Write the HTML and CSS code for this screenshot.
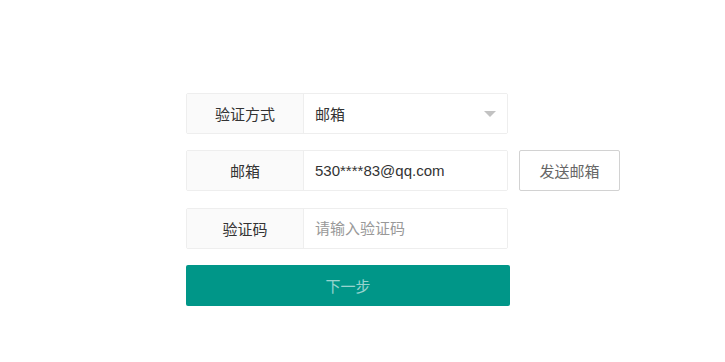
FILE: index.html
```html
<!DOCTYPE html>
<html lang="zh-CN">
<head>
  <meta charset="UTF-8" />
  <meta name="viewport" content="width=device-width, initial-scale=1" />
  <title>找回密码</title>
  <link rel="stylesheet" href="styles.css">
</head>
<body>
  <div class="page">
    <form class="verify-form" onsubmit="return false;">
      <div class="row">
        <div class="field">
          <label class="field-label">验证方式</label>
          <div class="field-input select">
            <span>邮箱</span>
            <i class="arrow"></i>
          </div>
        </div>
      </div>

      <div class="row">
        <div class="field">
          <label class="field-label">邮箱</label>
          <div class="field-input">530****83@qq.com</div>
        </div>
        <button type="button" class="send-btn">发送邮箱</button>
      </div>

      <div class="row">
        <div class="field">
          <label class="field-label" for="code">验证码</label>
          <input class="field-input" id="code" type="text" placeholder="请输入验证码" />
        </div>
      </div>

      <button type="submit" class="next-btn">下一步</button>
    </form>
  </div>
</body>
</html>
```

FILE: styles.css
```css
body {
  margin: 0;
  background-color: #fff;
  color: #333;
  font-family: 'Liberation Sans', 'Noto Sans CJK SC', sans-serif;
  font-size: 15px;
}
.page {
  padding: 93px 0 0 186px;
}
.verify-form {
  display: flex;
  flex-direction: column;
  align-items: flex-start;
  gap: 16.4px;
  width: 324px;
}
.row {
  display: flex;
  align-items: center;
}
.field {
  display: flex;
  width: 322px;
  height: 41px;
  border: 1px solid #eee;
  border-radius: 2px;
  box-sizing: border-box;
  overflow: hidden;
}
.field-label {
  width: 117px;
  flex: none;
  display: flex;
  align-items: center;
  justify-content: center;
  background-color: #fafafa;
  border-right: 1px solid #eee;
  box-sizing: border-box;
  color: #333;
}
.field-input {
  flex: 1;
  min-width: 0;
  display: flex;
  align-items: center;
  padding: 0 11px;
  border: none;
  outline: none;
  font-family: inherit;
  font-size: 15px;
  color: #333;
  background: #fff;
}
.field-input::placeholder {
  color: #999;
}
.select {
  justify-content: space-between;
}
.arrow {
  width: 0;
  height: 0;
  border-style: solid;
  border-width: 6px 6px 0;
  border-color: #c2c2c2 transparent transparent;
}
.send-btn {
  margin-left: 11px;
  width: 101px;
  height: 41px;
  border: 1px solid #d2d2d2;
  border-radius: 2px;
  background: #fff;
  color: #666;
  font-family: inherit;
  font-size: 15px;
  cursor: pointer;
  box-sizing: border-box;
}
.next-btn {
  width: 324px;
  height: 41px;
  border: none;
  border-radius: 2px;
  background-color: #009688;
  color: rgba(255, 255, 255, 0.6);
  font-family: inherit;
  font-size: 15px;
  cursor: pointer;
}
```
